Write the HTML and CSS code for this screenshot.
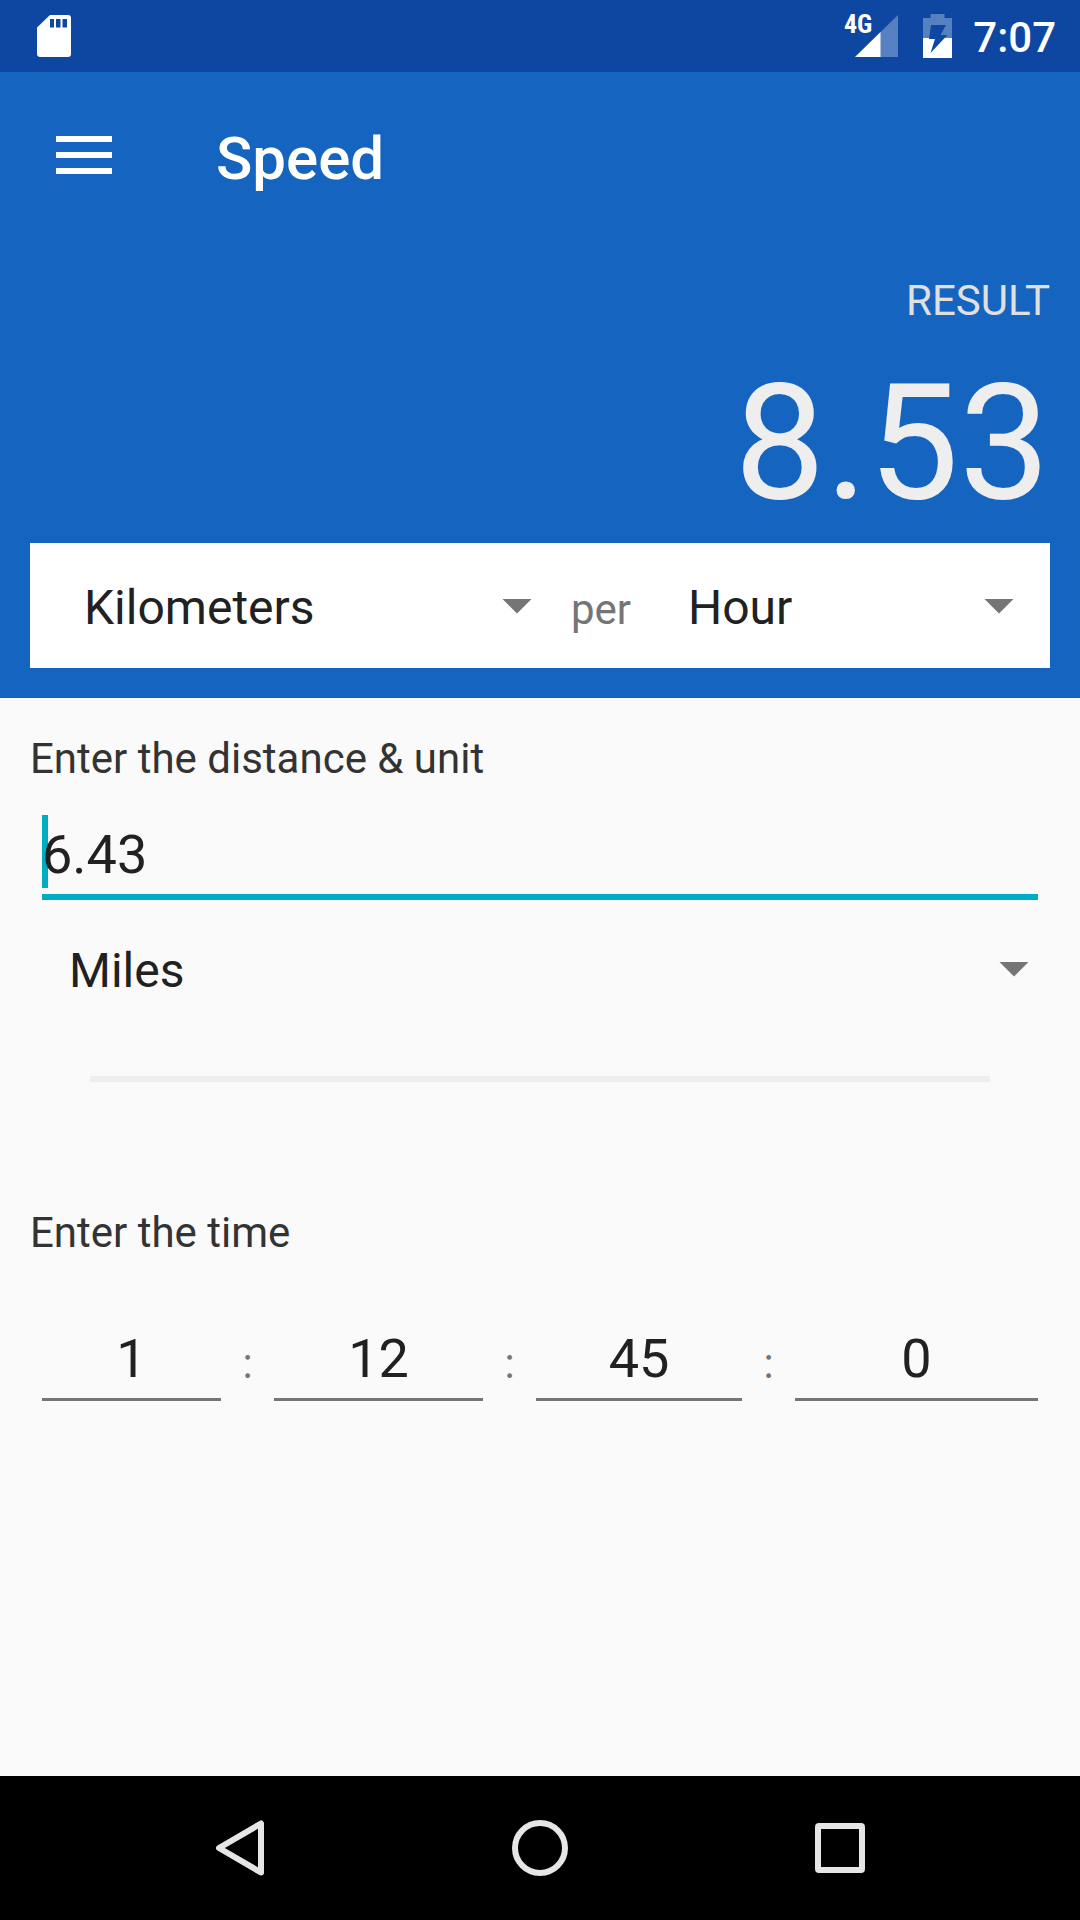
FILE: index.html
```html
<!DOCTYPE html>
<html lang="en">
<head>
<meta charset="utf-8">
<meta name="viewport" content="width=device-width, initial-scale=1">
<title>Speed</title>
<link rel="stylesheet" href="styles.css">
</head>
<body>
<div class="screen">
  <div class="status-bar">
    <svg class="sd-card" width="34" height="43" viewBox="0 0 34 43" aria-hidden="true">
      <path fill="#fff" fill-rule="evenodd" d="M13 0H31Q34 0 34 3V39Q34 42 31 42H3.500Q0 42 0 39V12.500ZM13 4V12.500H17V4ZM19 4V12.500H23.500V4ZM25.500 4V12.500H30V4Z"/>
    </svg>
    <div class="status-icons">
      <span class="network">4G</span>
      <svg class="signal" width="43" height="43" viewBox="0 0 43 43" aria-hidden="true">
        <path fill="#5680bf" d="M43 0V42H25V17.500Z"/>
        <path fill="#fff" d="M0 42L25.500 17V42Z"/>
      </svg>
      <svg class="battery" width="29" height="44" viewBox="0 0 29 44" aria-hidden="true">
        <path fill="#5680bf" d="M7.500 0H21.500V4H29V24H0V4H7.500Z"/>
        <path fill="#fff" d="M0 24H29V44H0Z"/>
        <path fill="#0d47a1" d="M8 11H23L17.500 21H24.500L7.500 39L12 25H6Z"/>
      </svg>
      <time class="clock">7:07</time>
    </div>
  </div>

  <header class="header">
    <div class="toolbar">
      <button class="menu-button" type="button" aria-label="Open menu">
        <svg class="menu-icon" width="56" height="38" viewBox="0 0 56 38" aria-hidden="true">
          <path fill="#fff" d="M0 0H56V6H0ZM0 16H56V22H0ZM0 32H56V38H0Z"/>
        </svg>
      </button>
      <h1 class="title">Speed</h1>
    </div>
    <div class="result">
      <label class="result-label" for="result">RESULT</label>
      <output class="result-value" id="result">8.53</output>
    </div>
    <div class="unit-card">
      <div class="spinner">
        <select class="spinner-select" aria-label="Result distance unit">
          <option>Kilometers</option>
          <option>Miles</option>
        </select>
      </div>
      <span class="per">per</span>
      <div class="spinner">
        <select class="spinner-select" aria-label="Result time unit">
          <option>Hour</option>
          <option>Minute</option>
        </select>
      </div>
    </div>
  </header>

  <main class="form">
    <label class="form-label" for="distance">Enter the distance &amp; unit</label>
    <div class="distance-field">
      <span class="cursor"></span>
      <input class="field field-active" id="distance" type="text" inputmode="decimal" value="6.43">
    </div>
    <div class="spinner distance-unit">
      <select class="spinner-select" aria-label="Distance unit">
        <option>Miles</option>
        <option>Kilometers</option>
      </select>
    </div>
    <hr class="divider">
    <label class="form-label" for="hours">Enter the time</label>
    <div class="time-row">
      <input class="field" id="hours" type="text" inputmode="numeric" value="1">
      <span class="colon">:</span>
      <input class="field" type="text" inputmode="numeric" value="12" aria-label="Minutes">
      <span class="colon">:</span>
      <input class="field" type="text" inputmode="numeric" value="45" aria-label="Seconds">
      <span class="colon">:</span>
      <input class="field" type="text" inputmode="numeric" value="0" aria-label="Milliseconds">
    </div>
  </main>

  <nav class="nav-bar" aria-label="System">
    <button class="nav-button" type="button" aria-label="Back">
      <svg width="56" height="56" viewBox="0 0 56 56" aria-hidden="true">
        <path fill="none" stroke="#e6e6e6" stroke-width="6" stroke-linejoin="round" d="M49 3.500V52.500L7 28Z"/>
      </svg>
    </button>
    <button class="nav-button" type="button" aria-label="Home">
      <svg width="56" height="56" viewBox="0 0 56 56" aria-hidden="true">
        <circle cx="28" cy="28" r="25" fill="none" stroke="#e6e6e6" stroke-width="6"/>
      </svg>
    </button>
    <button class="nav-button" type="button" aria-label="Recent apps">
      <svg width="56" height="56" viewBox="0 0 56 56" aria-hidden="true">
        <rect x="6" y="6" width="44" height="44" rx="1" fill="none" stroke="#e6e6e6" stroke-width="6" stroke-linejoin="round"/>
      </svg>
    </button>
  </nav>
</div>
</body>
</html>
```
FILE: styles.css
```css
* {
  box-sizing: border-box;
}

body {
  margin: 0;
  font-family: Roboto, "Noto Sans", sans-serif;
  font-size: 42px;
  line-height: 50px;
  color: #212121;
  background: #fafafa;
}

button,
input,
select {
  margin: 0;
  padding: 0;
  border: 0;
  border-radius: 0;
  background: none;
  color: inherit;
  font-family: inherit;
}

svg {
  display: block;
}

.screen {
  display: flex;
  flex-direction: column;
  min-height: 100vh;
}

/* Status bar */
.status-bar {
  display: flex;
  justify-content: space-between;
  align-items: center;
  height: 72px;
  padding: 0 24px 0 37px;
  background: #0d47a1;
  color: #fff;
}

.status-icons {
  display: flex;
  align-items: center;
}

.network {
  align-self: flex-start;
  margin-right: -17px;
  font-family: "Roboto Condensed", Roboto, sans-serif;
  font-size: 26px;
  font-weight: 700;
  line-height: 30px;
}

.battery {
  margin: 0 21px 0 25px;
}

.clock {
  padding-top: 4px;
  font-weight: 500;
}

/* Header */
.header {
  padding: 0 30px 30px;
  background: #1565c0;
}

.toolbar {
  display: flex;
  align-items: center;
  height: 166px;
  color: #fff;
}

.menu-button {
  width: 186px;
  padding: 0 26px;
}

.title {
  margin: 0;
  padding-top: 8px;
  font-size: 60px;
  font-weight: 500;
  line-height: 70px;
}

.result {
  display: flex;
  flex-direction: column;
  align-items: flex-end;
  gap: 22px;
  padding: 38px 0 5px;
}

.result-label {
  color: #e0e0e0;
}

.result-value {
  font-size: 162px;
  line-height: 190px;
  color: #eee;
}

.unit-card {
  display: grid;
  grid-template-columns: 448fr 156px 326fr;
  align-items: baseline;
  padding: 36px 36px 33px 54px;
  background: #fff;
}

.per {
  padding-left: 39px;
  line-height: 42px;
  color: #757575;
}

/* Drop-down with a triangle at its right end */
.spinner {
  display: grid;
  align-items: center;
}

.spinner::after {
  content: "";
  grid-area: 1 / 1;
  justify-self: end;
  width: 30px;
  height: 15px;
  margin-bottom: 2px;
  background: #757575;
  clip-path: polygon(0 0, 100% 0, 50% 100%);
  pointer-events: none;
}

.spinner-select {
  grid-area: 1 / 1;
  width: 100%;
  height: 56px;
  padding-top: 1px;
  appearance: none;
  font-size: 48px;
  line-height: 56px;
}

/* Form */
.form {
  flex: 1;
  padding: 36px 30px;
}

.form-label {
  display: block;
  color: #333;
}

.field {
  display: block;
  width: 100%;
  min-width: 0;
  height: 74px;
  padding-bottom: 9px;
  border-bottom: 3px solid #757575;
  font-size: 54px;
  line-height: 62px;
  text-align: center;
}

.distance-field {
  position: relative;
  margin: 31px 12px 0;
  padding-top: 8px;
}

.field-active {
  position: relative;
  height: 77px;
  border-bottom: 6px solid #00acc1;
  text-align: left;
}

.cursor {
  position: absolute;
  top: 0;
  left: 0;
  width: 6px;
  height: 73px;
  background: #00acc1;
}

.distance-unit {
  margin: 42px 21px 0 39px;
}

.divider {
  height: 6px;
  margin: 78px 60px 126px;
  border: 0;
  background: #eee;
}

.time-row {
  display: grid;
  grid-template-columns: 179fr 53px 209fr 53px 206fr 53px 243fr;
  align-items: start;
  margin: 69px 12px 0;
}

.colon {
  padding-top: 12px;
  text-align: center;
  color: #757575;
}

/* System navigation */
.nav-bar {
  display: flex;
  justify-content: center;
  height: 144px;
  background: #000;
}

.nav-button {
  display: grid;
  place-items: center;
  width: 300px;
}
```
